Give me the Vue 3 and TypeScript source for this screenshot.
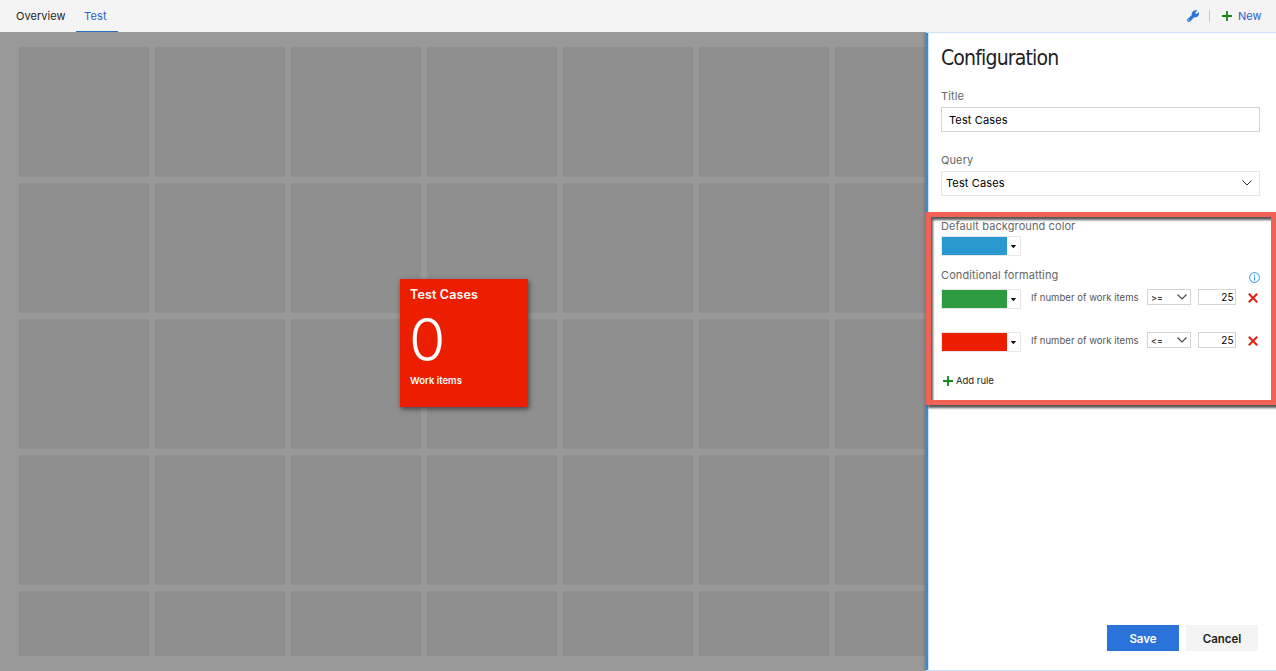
<script setup lang="ts">
import { ref } from 'vue'

interface Rule {
  color: string
  operator: string
  value: number
}

const tabs = ['Overview', 'Test']
const activeTab = ref('Test')
const title = ref('Test Cases')
const rules = ref<Rule[]>([
  { color: '#2d9a41', operator: '>=', value: 25 },
  { color: '#ec1e00', operator: '<=', value: 25 },
])
const tiles = 35

function addRule() {
  rules.value.push({ color: '#2a99d0', operator: '>=', value: 0 })
}
</script>

<template>
  <div class="app">
    <header class="topbar">
      <nav class="tabs">
        <a v-for="tab in tabs" :key="tab" class="tab" :class="{ active: tab === activeTab }" @click="activeTab = tab">{{ tab }}</a>
      </nav>
      <div class="actions">
        <svg class="wrench" width="12" height="12" viewBox="0 0 12 12">
          <path d="M.4 9.400 5 5C4.500 2.800 6 .4 8.800.2l1.200.4-1.800 1.900.3 1.200 1.300.3 1.900-1.700.2.900c0 2.700-2.300 4.300-4.700 3.900L2.900 11.500C1.300 12.500-.5 10.800.4 9.400z" fill="#2a73da" stroke="#2a73da" stroke-width=".4" />
          <circle cx="1.900" cy="10.100" r=".6" fill="#f4f4f4" />
        </svg>
        <span class="divider"></span>
        <svg width="10" height="10" viewBox="0 0 10 10"><path d="M5 0v10M0 5h10" stroke="#138a13" stroke-width="1.8" /></svg>
        <span class="new">New</span>
      </div>
    </header>

    <main class="workspace">
      <section class="board">
        <div class="grid">
          <div v-for="n in tiles" :key="n" class="cell"></div>
        </div>
        <article class="widget">
          <h2>{{ title }}</h2>
          <div class="count">0</div>
          <div class="caption">Work items</div>
        </article>
      </section>

      <aside class="panel">
        <h1>Configuration</h1>
        <label class="label">Title</label>
        <div class="field title-field">{{ title }}</div>
        <label class="label query-label">Query</label>
        <div class="field query-field">
          <span>Test Cases</span>
          <svg width="10" height="6" viewBox="0 0 10 6"><path d="M.5.5 5 5 9.500.5" fill="none" stroke="#333" /></svg>
        </div>

        <div class="label default-label">Default background color</div>
        <div class="picker">
          <span class="swatch blue"></span>
          <svg class="caret" width="7" height="4" viewBox="0 0 7 4"><path d="M.6 0h5.600L3.400 3.300z" fill="#111" /></svg>
        </div>

        <div class="conditional">
          <span class="label">Conditional formatting</span>
          <svg class="info" width="11" height="11" viewBox="0 0 11 11">
            <circle cx="5.500" cy="5.500" r="4.900" fill="none" stroke="#2a93e2" stroke-width="1" />
            <path d="M5.500 4.600v3.900M5.500 2.600v1.100" stroke="#2a93e2" />
          </svg>
        </div>
        <div v-for="(rule, i) in rules" :key="i" class="rule">
          <div class="picker">
            <span class="swatch" :style="{ background: rule.color }"></span>
            <svg class="caret" width="7" height="4" viewBox="0 0 7 4"><path d="M.6 0h5.600L3.400 3.300z" fill="#111" /></svg>
          </div>
          <span class="condition">If number of work items</span>
          <div class="operator">
            <span>{{ rule.operator }}</span>
            <svg width="10" height="6" viewBox="0 0 10 6"><path d="M.5.5 5 5 9.500.5" fill="none" stroke="#444" stroke-width="1.100" /></svg>
          </div>
          <div class="number">{{ rule.value }}</div>
          <svg class="remove" width="10" height="10" viewBox="0 0 10 10"><path d="M.8.8 9.200 9.200M9.200.8.8 9.200" stroke="#e02010" stroke-width="2" /></svg>
        </div>
        <div class="add" @click="addRule">
          <svg width="10" height="10" viewBox="0 0 10 10"><path d="M5 0v10M0 5h10" stroke="#138a13" stroke-width="1.800" /></svg>
          <span>Add rule</span>
        </div>

        <footer>
          <button class="save">Save</button>
          <button class="cancel">Cancel</button>
        </footer>
      </aside>
    </main>
    <div class="callout"></div>
  </div>
</template>

<style>
body {
  margin: 0;
  overflow: hidden;
}
</style>

<style scoped>
.app {
  position: relative;
  width: 1276px;
  height: 671px;
  overflow: hidden;
  font-family: Inter, "Liberation Sans", sans-serif;
  font-size: 11px;
  color: #000;
}
.app * {
  box-sizing: border-box;
}
svg {
  display: block;
  flex: none;
}
.topbar {
  position: relative;
  z-index: 1;
  height: 32px;
  display: flex;
  justify-content: space-between;
  background: #f4f4f4;
}
.tabs {
  display: flex;
  gap: 3px;
  padding-left: 8px;
}
.tab {
  height: 32px;
  padding: 0 8px;
  line-height: 32px;
  color: #222;
  letter-spacing: .05px;
  width: 65px;
  white-space: nowrap;
}
.tab.active {
  width: 42px;
  color: #2463c7;
  letter-spacing: .2px;
  border-bottom: 1px solid #2a6fc4;
}
.actions {
  display: flex;
  align-items: center;
  padding-right: 14px;
}
.divider {
  width: 1px;
  height: 12px;
  margin: 0 12px 0 10px;
  background: #c8c8c8;
}
.new {
  width: 24px;
  margin-left: 6px;
  color: #2463d0;
}
.workspace {
  display: flex;
  height: 639px;
}
.board {
  position: relative;
  width: 926px;
  overflow: hidden;
  background: #999;
}
.grid {
  display: grid;
  grid-template-columns: repeat(7, 130px);
  grid-template-rows: repeat(4, 130px) 65px;
  gap: 6px;
  padding: 15px 0 0 19px;
}
.cell {
  background: #8f8f8f;
}
.widget {
  position: absolute;
  left: 400px;
  top: 247px;
  width: 128px;
  height: 128px;
  padding: 8px 10px;
  background: #ec1e00;
  color: #fff;
  box-shadow: 1px 2px 5px rgba(0, 0, 0, .55);
}
.widget h2 {
  margin: 0;
  font-size: 12.5px;
  font-weight: 600;
  line-height: 16px;
  letter-spacing: .15px;
}
.count {
  margin: 5px 0 0 -1px;
  font-size: 59px;
  font-weight: 300;
  line-height: 64px;
}
.caption {
  margin-top: 3px;
  font-size: 9.5px;
  font-weight: 600;
  line-height: 12px;
}
.panel {
  position: relative;
  display: flex;
  flex-direction: column;
  width: 350px;
  padding: 0 16px 19px 15px;
  background: #fff;
  border: solid #c9e1fb;
  border-width: 1px 0;
  box-shadow: inset 2px 0 #3f8acb, inset 3px 0 #c9e1fb, 0 0 4px rgba(0, 0, 0, .4);
}
h1 {
  margin: 12px 0 0;
  font-family: "DejaVu Sans Condensed", "DejaVu Sans", sans-serif;
  font-stretch: condensed;
  font-size: 21px;
  font-weight: 400;
  line-height: 26px;
  letter-spacing: -.83px;
  color: #222;
}
.label {
  font-size: 11px;
  line-height: 14px;
  color: #666;
  letter-spacing: .1px;
}
h1 + .label {
  margin-top: 18px;
}
.field {
  display: flex;
  align-items: center;
  height: 25px;
  margin-top: 4px;
  border: 1px solid #d4d4d4;
  letter-spacing: .12px;
}
.title-field {
  padding-left: 7px;
}
.query-label {
  margin-top: 21px;
}
.query-field {
  justify-content: space-between;
  padding: 0 7px 0 4px;
  border-color: #e6e6e6;
}
.query-field span {
  margin-bottom: 2px;
}
.query-field svg {
  margin-bottom: 1px;
}
.default-label {
  margin-top: 23px;
}
.picker {
  display: flex;
  align-items: center;
  width: 80px;
  height: 20px;
  flex: none;
  border: 1px solid #e6e6e6;
}
.default-label + .picker {
  margin-top: 3px;
}
.swatch {
  width: 65px;
  height: 18px;
}
.blue {
  background: #2a99d0;
}
.caret {
  margin: 2px 0 0 3px;
}
.conditional {
  display: flex;
  justify-content: space-between;
  margin-top: 12px;
  height: 21px;
}
.info {
  margin-top: 4px;
}
.rule {
  display: flex;
  align-items: flex-start;
  height: 43px;
}
.condition {
  width: 116px;
  margin: 2px 0 0 10px;
  font-size: 9.5px;
  line-height: 14px;
  color: #555;
  letter-spacing: .03px;
  white-space: nowrap;
}
.operator {
  display: flex;
  align-items: center;
  justify-content: space-between;
  width: 44px;
  height: 16px;
  padding: 0 3px;
  border: 1px solid #d4d4d4;
  font-size: 9px;
  font-feature-settings: "calt" 0;
}
.number {
  width: 38px;
  height: 16px;
  margin-left: 7px;
  padding-right: 1.5px;
  border: 1px solid #d4d4d4;
  font-size: 10px;
  line-height: 15px;
  text-align: right;
}
.remove {
  margin: 4px 0 0 12px;
}
.add {
  display: flex;
  align-items: center;
  gap: 3px;
  height: 14px;
  margin: -1px 0 0 2px;
  font-size: 9.5px;
  color: #222;
}
.add span {
  margin-bottom: 1px;
}
footer {
  display: flex;
  gap: 7px;
  justify-content: flex-end;
  margin: auto 2px 0 0;
}
footer button {
  width: 72px;
  height: 26px;
  padding: 2px 0 0;
  border: 0;
  font: 600 11.500px/24px Inter, sans-serif;
}
.save {
  background: #2a73da;
  color: #fff;
}
.cancel {
  background: #f3f3f3;
  color: #222;
}
/* Annotation frame drawn over the formatting rules. */
.callout {
  position: absolute;
  left: 926px;
  top: 212px;
  width: 350px;
  height: 193px;
  border: 5px solid #f16256;
  filter: drop-shadow(2px 3px 1px rgba(0, 0, 0, .65));
  pointer-events: none;
}
</style>
